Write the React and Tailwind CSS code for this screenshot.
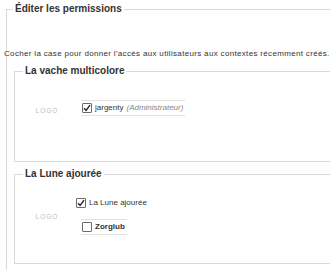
import React from 'react';

const Check = ({ checked }) => (
  <span className="inline-flex items-center justify-center w-[10px] h-[10px] border border-[#6b6b6b] rounded-[1px] bg-white shrink-0">
    {checked && (
      <svg width="8" height="8" viewBox="0 0 8 8">
        <path d="M1 4.2 L3.1 6.4 L7 1.2" fill="none" stroke="#222" strokeWidth="1.4" />
      </svg>
    )}
  </span>
);

const Logo = ({ className = '' }) => (
  <div className={'w-[64px] shrink-0 text-center text-[6.5px] tracking-[1px] text-[#bdbdbd] ' + className}>LOGO</div>
);

export default function App() {
  return (
    <div className="w-[330px] h-[270px] overflow-hidden bg-white pt-[3px] font-['Liberation_Sans',Arial,sans-serif] text-[#333]">
      <fieldset className="ml-[6px] w-[340px] border-t border-l border-[#d9d9d9] pb-[20px]">
        <legend className="ml-[6px] px-[2px] text-[10px] leading-[12px] font-bold text-[#333]">
          Éditer les permissions
        </legend>

        <p className="-ml-[3px] mt-[34px] text-[8px] leading-[10px] tracking-[0.33px] text-[#333] whitespace-nowrap">
          Cocher la case pour donner l'accès aux utilisateurs aux contextes récemment créés.
        </p>

        <fieldset className="ml-[7px] mt-[6px] border border-r-0 border-[#d9d9d9] pt-[22px] pb-[45px]">
          <legend className="ml-[8px] px-[2px] text-[10px] leading-[12px] font-bold text-[#333]">
            La vache multicolore
          </legend>
          <div className="flex items-center">
            <Logo className="mt-[7px]" />
            <div className="ml-[2px] mt-[1px] flex items-center gap-[3px] border-y border-[#e2e2e2] py-[2px] pl-[1px] pr-[2px] text-[8px] leading-[10px]">
              <Check checked />
              <span>jargenty</span>
              <span className="italic text-[#888]">(Administrateur)</span>
            </div>
          </div>
        </fieldset>

        <fieldset className="ml-[7px] mt-[6px] border border-r-0 border-[#d9d9d9] pt-[18px] pb-[28px]">
          <legend className="ml-[8px] px-[2px] text-[10px] leading-[12px] font-bold text-[#333]">
            La Lune ajourée
          </legend>
          <div className="flex items-center">
            <Logo />
            <div className="flex flex-col">
              <div className="-ml-[3px] flex items-center gap-[3px] text-[8px] leading-[10px]">
                <Check checked />
                <span>La Lune ajourée</span>
              </div>
              <div className="ml-[2px] mt-[11px] self-start flex items-center gap-[3px] border-y border-[#e2e2e2] py-[2px] pl-[1px] pr-[2px] text-[8px] leading-[10px] font-bold">
                <Check />
                <span>Zorglub</span>
              </div>
            </div>
          </div>
        </fieldset>
      </fieldset>
    </div>
  );
}
